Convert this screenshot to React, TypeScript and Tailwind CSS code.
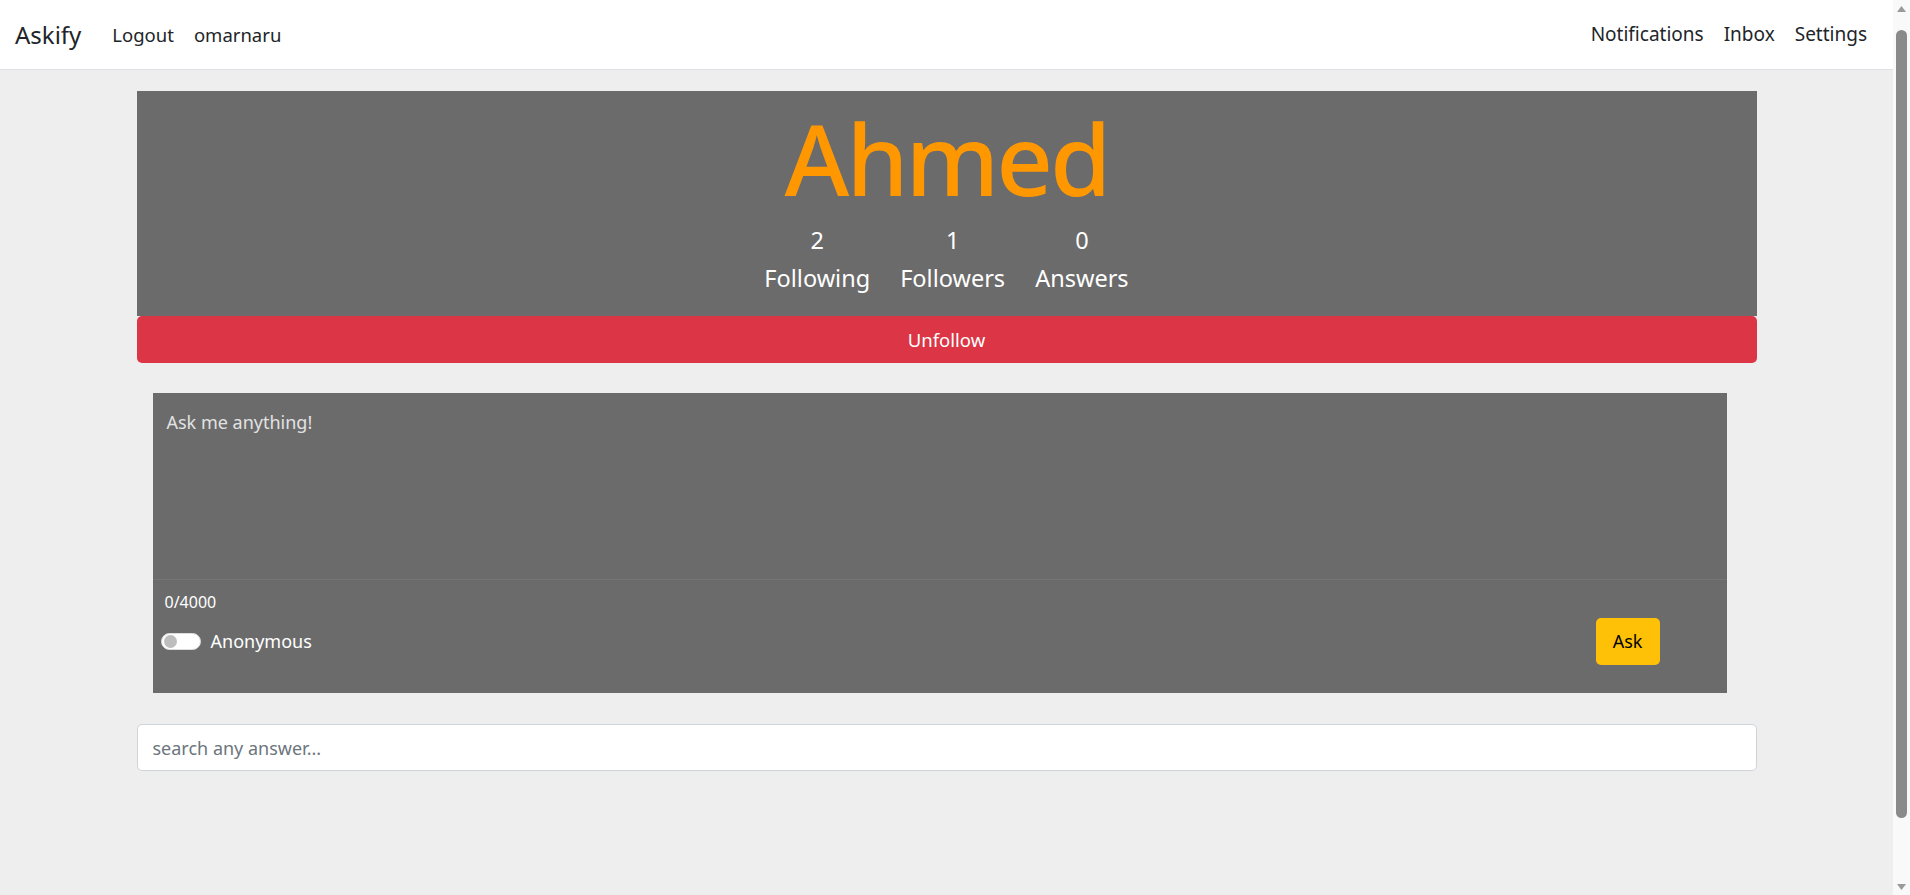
import React from "react";

function Scrollbar() {
  return (
    <div className="w-[17px] h-[895px] bg-[#f9f9f9] flex flex-col items-center shrink-0">
      <div className="h-[17px] flex items-center justify-center">
        <svg width="9" height="6" viewBox="0 0 9 6"><path d="M0 6 L4.5 0 L9 6 Z" fill="#9a9a9a" /></svg>
      </div>
      <div className="w-[11px] h-[788px] mt-[13px] rounded-full bg-[#8a8a8a]"></div>
      <div className="flex-1"></div>
      <div className="h-[17px] flex items-center justify-center">
        <svg width="9" height="6" viewBox="0 0 9 6"><path d="M0 0 L4.5 6 L9 0 Z" fill="#9a9a9a" /></svg>
      </div>
    </div>
  );
}

export default function App() {
  return (
    <div className="h-[895px] flex overflow-hidden bg-[#eeeeee] text-[#212529]" style={{ fontFamily: '"Noto Sans", "Open Sans", sans-serif' }}>
      <div className="flex-1 min-w-0">
        <nav className="h-[70px] bg-white border-b border-[#dee2e6] flex items-center justify-between pl-[15px] pr-[26px]">
          <div className="flex items-center">
            <span className="text-[24px] leading-none mr-[31px]">Askify</span>
            <a className="text-[18.5px] mr-[20px]">Logout</a>
            <a className="text-[18.5px]">omarnaru</a>
          </div>
          <div className="flex items-center gap-[20px] text-[19px]">
            <a>Notifications</a>
            <a>Inbox</a>
            <a>Settings</a>
          </div>
        </nav>

        <div className="mx-auto w-[1620px] pt-[21px]">
          <div className="bg-[#6b6b6b] h-[225px] flex flex-col items-center">
            <div className="text-[#ff9800] text-[99px] font-medium tracking-[-3px] leading-none mt-[17px] h-[107px]">Ahmed</div>
            <div className="flex gap-[30px] text-white mt-[6px]">
              <div className="flex flex-col items-center">
                <span className="text-[23.5px] leading-[38px]">2</span>
                <span className="text-[23.5px] leading-[38px]">Following</span>
              </div>
              <div className="flex flex-col items-center">
                <span className="text-[23.5px] leading-[38px]">1</span>
                <span className="text-[23.5px] leading-[38px]">Followers</span>
              </div>
              <div className="flex flex-col items-center">
                <span className="text-[23.5px] leading-[38px]">0</span>
                <span className="text-[23.5px] leading-[38px]">Answers</span>
              </div>
            </div>
          </div>
          <button className="w-full h-[47px] bg-[#dc3545] rounded-[5px] text-white text-[18.5px] flex items-center justify-center">
            Unfollow
          </button>

          <div className="ml-[16px] mr-[30px] mt-[30px] bg-[#6b6b6b]">
            <div className="h-[187px] border-b border-[#757575] px-[14px] pt-[16px]">
              <span className="text-[18px] text-[#e2e2e2]">Ask me anything!</span>
            </div>
            <div className="h-[113px] relative px-[12px] pt-[11px]">
              <div className="text-[16px] text-white leading-[22px]">0/4000</div>
              <div className="flex items-center mt-[15px] ml-[-4px]">
                <div className="w-[40px] h-[17px] rounded-full bg-white border border-[#dddddd] flex items-center px-[2px]">
                  <div className="w-[13px] h-[13px] rounded-full bg-[#bdbdbd]"></div>
                </div>
                <span className="text-[18px] text-white ml-[10px]">Anonymous</span>
              </div>
              <button className="absolute right-[67px] top-[38px] w-[64px] h-[47px] bg-[#ffc107] rounded-[5px] text-[18px] text-black flex items-center justify-center">
                Ask
              </button>
            </div>
          </div>

          <div className="mt-[31px]">
            <input
              className="w-full h-[47px] bg-white border border-[#ced4da] rounded-[5px] px-[15px] text-[18px] placeholder:text-[#6c757d] outline-none"
              placeholder="search any answer..."
            />
          </div>
        </div>
      </div>
      <Scrollbar />
    </div>
  );
}
